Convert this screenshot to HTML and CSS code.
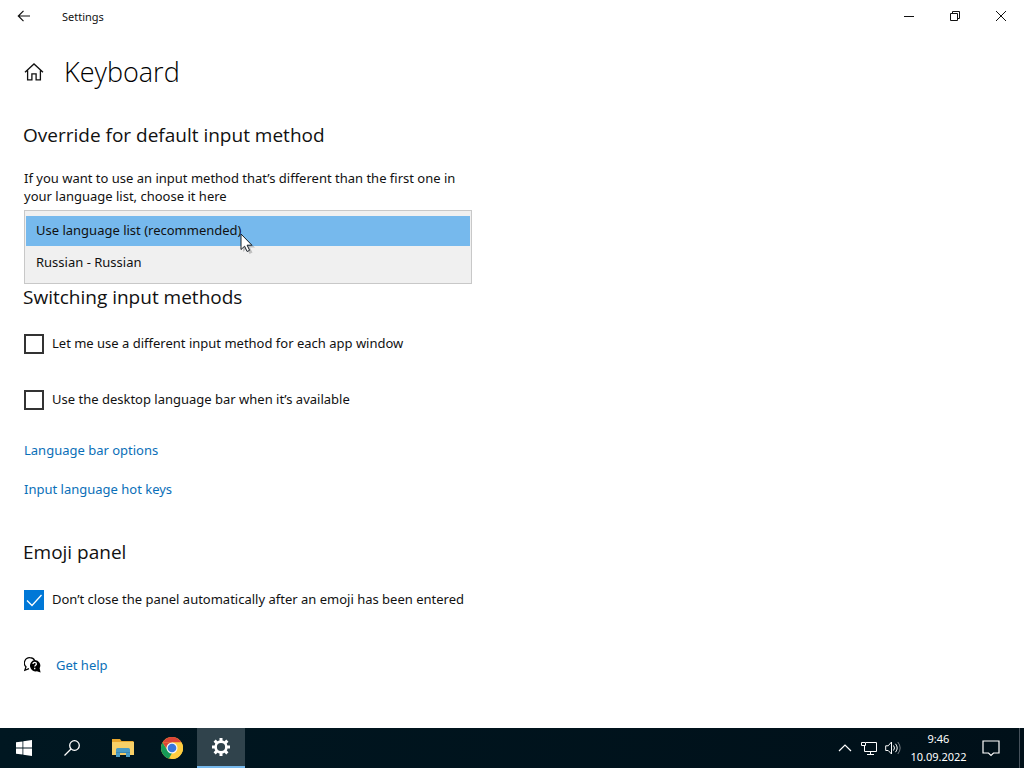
FILE: index.html
```html
<!DOCTYPE html>
<html lang="en">
<head>
<meta charset="utf-8">
<meta name="viewport" content="width=device-width, initial-scale=1">
<title>Settings</title>
<link rel="stylesheet" href="styles.css">
</head>
<body>
<header class="titlebar">
  <button class="back" aria-label="Back"><svg width="14" height="14" viewBox="0 0 14 14" fill="none" stroke="currentColor" stroke-width="1.2"><path d="M13 7H1.5M6.5 1.8L1.3 7l5.2 5.2"/></svg></button>
  <span class="app-name">Settings</span>
  <div class="window-buttons">
    <button aria-label="Minimize"><svg width="12" height="12" viewBox="0 0 12 12" fill="none" stroke="currentColor"><path d="M1 6.500h10"/></svg></button>
    <button aria-label="Restore"><svg width="12" height="12" viewBox="0 0 12 12" fill="none" stroke="currentColor"><path d="M1.500 3.500h7v7h-7zM3.500 3.500v-2h7v7h-2"/></svg></button>
    <button aria-label="Close"><svg width="12" height="12" viewBox="0 0 12 12" fill="none" stroke="currentColor"><path d="M1 1l10 10M11 1L1 11"/></svg></button>
  </div>
</header>
<main class="page">
  <div class="page-title">
    <button aria-label="Home"><svg width="20" height="20" viewBox="0 0 20 20" fill="none" stroke="currentColor" stroke-width="1.3"><path d="M1 10.200L10 2l9 8.200M3.600 8.500v9.300h4.300v-6h4.200v6h4.300V8.500"/></svg></button>
    <h1>Keyboard</h1>
  </div>
  <section class="override">
    <h2>Override for default input method</h2>
    <label class="description" for="method">If you want to use an input method that’s different than the first one in your language list, choose it here</label>
    <div class="dropdown">
      <select id="method" size="2">
        <option selected>Use language list (recommended)</option>
        <option>Russian - Russian</option>
      </select>
      <svg class="cursor" width="16" height="22" viewBox="0 0 16 22"><path d="M3 3v16l3.800-3.500 2.700 5.500 3-1.400-2.600-5.200H15z" fill="#0003"/><path d="M1 1v15.500l3.600-3.300 2.500 5.300 2.500-1.200-2.500-5.100h4.800z" fill="#fff" stroke="#182028"/></svg>
    </div>
  </section>
  <section class="switching">
    <h2>Switching input methods</h2>
    <label class="check"><input type="checkbox"><span>Let me use a different input method for each app window</span></label>
    <label class="check"><input type="checkbox"><span>Use the desktop language bar when it’s available</span></label>
    <nav class="links">
      <a href="#language-bar">Language bar options</a>
      <a href="#hot-keys">Input language hot keys</a>
    </nav>
  </section>
  <section class="emoji">
    <h2>Emoji panel</h2>
    <label class="check"><input type="checkbox" checked><span>Don’t close the panel automatically after an emoji has been entered</span></label>
  </section>
  <div class="help">
    <svg width="17" height="17" viewBox="0 0 17 17"><path d="M5 11.600L.8 13.200l1.200-3.400A5.300 5.300 0 0 1 5.900.7c2.300 0 4 1.200 4.900 3" fill="none" stroke="#000" stroke-width="1.200"/><path d="M10.600 3a5.500 5.500 0 0 1 5 8.200l1 4.300-3.700-1.200A5.700 5.700 0 1 1 10.600 3z"/><path d="M9 6.900c0-2.200 3.400-2.100 3.400 0 0 1.300-1.700 1.300-1.700 2.600M10.700 10.800v1.400" fill="none" stroke="#fff" stroke-width="1.300"/></svg>
    <a href="#help">Get help</a>
  </div>
</main>
<footer class="taskbar">
  <div class="apps">
    <button aria-label="Start"><svg width="16" height="16" viewBox="0 0 16 16" fill="#fff"><path d="M0 2.300l6.500-.9v6.200H0zM7.300 1.300L16 0v7.600H7.300zM0 8.400h6.500v6.200L0 13.700zM7.300 8.400H16V16l-8.700-1.300z"/></svg></button>
    <button aria-label="Search"><svg width="16" height="16" viewBox="0 0 16 16" fill="none" stroke="#fff" stroke-width="1.300"><circle cx="10.500" cy="5.500" r="4.800"/><path d="M7 9L.5 15.500"/></svg></button>
    <button class="pinned" aria-label="File Explorer"><svg width="22" height="18" viewBox="0 0 22 18"><path d="M0 0h8l1.500 2H21.500v14H0z" fill="#e9a72d"/><path d="M0 3h22v13H0z" fill="#f8d067"/><path d="M4 18V10.500Q4 9 5.500 9h11Q18 9 18 10.500V18h-4v-4H8v4z" fill="#4a9bc4"/><path d="M4 13h14v1H4z" fill="#3988b3"/><path d="M8 14h6v2H8z" fill="#f3ca65"/></svg></button>
    <button class="pinned" aria-label="Google Chrome"><svg width="22" height="22" viewBox="0 0 22 22"><circle cx="11" cy="11" r="11" fill="#ffcd40"/><path d="M1.500 5.500A11 11 0 0 1 20.500 5.500H11z" fill="#db4437"/><path d="M1.500 5.500L6.700 13.500 11 16l-3 5.600A11 11 0 0 1 1.500 5.500z" fill="#169b58"/><path d="M1.500 5.500h9.500v5H5z" fill="#db4437"/><path d="M11 5.500h9.500A11 11 0 0 1 10 22l5-8.500z" fill="#ffcd40"/><circle cx="11" cy="11" r="5.500" fill="#f4f5f5"/><circle cx="11" cy="11" r="4.300" fill="#3976dc"/></svg></button>
    <button class="active" aria-label="Settings"><svg width="18" height="18" viewBox="0 0 18 18" fill="none" stroke="#fff"><circle cx="9" cy="9" r="5.400" stroke-width="2.600"/><path d="M9 0v3.500M9 14.500V18M0 9h3.500M14.500 9H18M2.600 2.600l2.500 2.500M12.900 12.900l2.500 2.500M15.400 2.600l-2.500 2.500M5.100 12.900l-2.500 2.500" stroke-width="3"/></svg></button>
  </div>
  <div class="tray">
    <button aria-label="Show hidden icons"><svg width="14" height="8" viewBox="0 0 14 8" fill="none" stroke="#fff" stroke-width="1.200"><path d="M1 7l6-6 6 6"/></svg></button>
    <button aria-label="Network"><svg width="16" height="14" viewBox="0 0 16 14" fill="none" stroke="#fff"><path d="M5 1.500h10.500v9H3.500V5M9.500 10.500v3M6 13.500h7M.5 1.500h4v3h-4z"/></svg></button>
    <button aria-label="Volume"><svg width="16" height="14" viewBox="0 0 16 14" fill="none" stroke="#fff"><path d="M.7 4.800h2.500L6.500 1v12L3.200 9.500H.7zM8.500 4.500q2 2.500 0 5M10.500 2.800q3.400 4.200 0 8.400"/><path d="M12.800 1q4.700 6 0 12" stroke="#798087"/></svg></button>
    <button class="clock"><span>9:46</span><span>10.09.2022</span></button>
    <button class="notifications" aria-label="Notifications"><svg width="18" height="17" viewBox="0 0 18 17" fill="none" stroke="#fff" stroke-width="1.200"><path d="M1 1h16v12h-5.500L9 15.500 6.500 13H1z"/></svg></button>
  </div>
</footer>
</body>
</html>
```
FILE: styles.css
```css
* { box-sizing: border-box; }
body {
  margin: 0;
  min-height: 100vh;
  display: flex;
  flex-direction: column;
  background: #fff;
  color: #111;
  font: 13px/18px "Noto Sans", "Open Sans", sans-serif;
}
button {
  display: flex;
  align-items: center;
  justify-content: center;
  padding: 0;
  border: 0;
  background: none;
  color: inherit;
  font: inherit;
}
h1, h2 { margin: 0; font-weight: 400; }
h1 { color: #000; font: 300 27px/34px "Open Sans", sans-serif; }
h2 { margin-left: -1px; font: 400 19px/26px "Open Sans", sans-serif; }
a { color: #0a6fb8; text-decoration: none; }
.titlebar { display: flex; height: 32px; align-items: stretch; }
.back { width: 48px; }
.app-name { padding-left: 14px; font-size: 11px; line-height: 34px; }
.window-buttons { display: flex; margin-left: auto; }
.window-buttons button { width: 46px; }
.page { flex: 1; padding: 23px 24px; }
.page-title { display: flex; gap: 20px; align-items: center; }
.override { max-width: 448px; padding-top: 33px; }
.description { display: block; padding-top: 21px; }
.dropdown { position: relative; margin-top: 5px; }
select {
  display: block;
  width: 100%;
  height: 74px;
  padding: 5px 1px;
  overflow: hidden;
  border: 1px solid #c8c8c8;
  border-radius: 0;
  outline: 0;
  background: #f0f0f0;
  color: #111;
  font: inherit;
}
option {
  min-height: 30px;
  margin-bottom: 2px;
  padding: 5px 10px;
  line-height: 20px;
  color: #111;
}
option:checked { background: linear-gradient(#76b9ed, #76b9ed); color: #111; }
.cursor { position: absolute; left: 216px; top: 23px; }
.check { display: flex; align-items: flex-start; gap: 8px; min-height: 20px; }
.check input {
  appearance: none;
  width: 20px;
  height: 20px;
  margin: 0;
  border: 2px solid #333;
  background: #fff;
}
.check input:checked {
  border: 0;
  background: url("data:image/svg+xml,%3Csvg xmlns='http://www.w3.org/2000/svg' viewBox='0 0 20 20'%3E%3Cpath d='M3 10.500l5 5L17.500 5' fill='none' stroke='white' stroke-width='1.300'/%3E%3C/svg%3E") #0078d7;
}
.switching .check { margin-top: 24px; }
.switching .check + .check { margin-top: 36px; }
.links { display: flex; flex-direction: column; align-items: flex-start; gap: 21px; padding-top: 31px; }
.emoji { padding-top: 41px; }
.emoji .check { margin-top: 25px; }
.help { display: flex; align-items: center; gap: 15px; padding-top: 46px; }
.taskbar { display: flex; height: 40px; background: linear-gradient(90deg, #001721, #001019); color: #fff; }
.apps, .tray { display: flex; }
.apps button { width: 48px; }
.apps .pinned { width: 49px; }
.apps .pinned:nth-child(3) { margin-left: 2px; }
.apps .active { margin-left: 1px; background: #30434c; border-bottom: 2px solid #76b9ed; }
.tray { margin-left: auto; }
.tray button { width: 24px; }
.tray .clock { width: 67px; flex-direction: column; font-size: 11px; }
.tray .notifications { width: 48px; margin-right: 4px; border-right: 1px solid #46515b; padding-right: 9px; }
```
